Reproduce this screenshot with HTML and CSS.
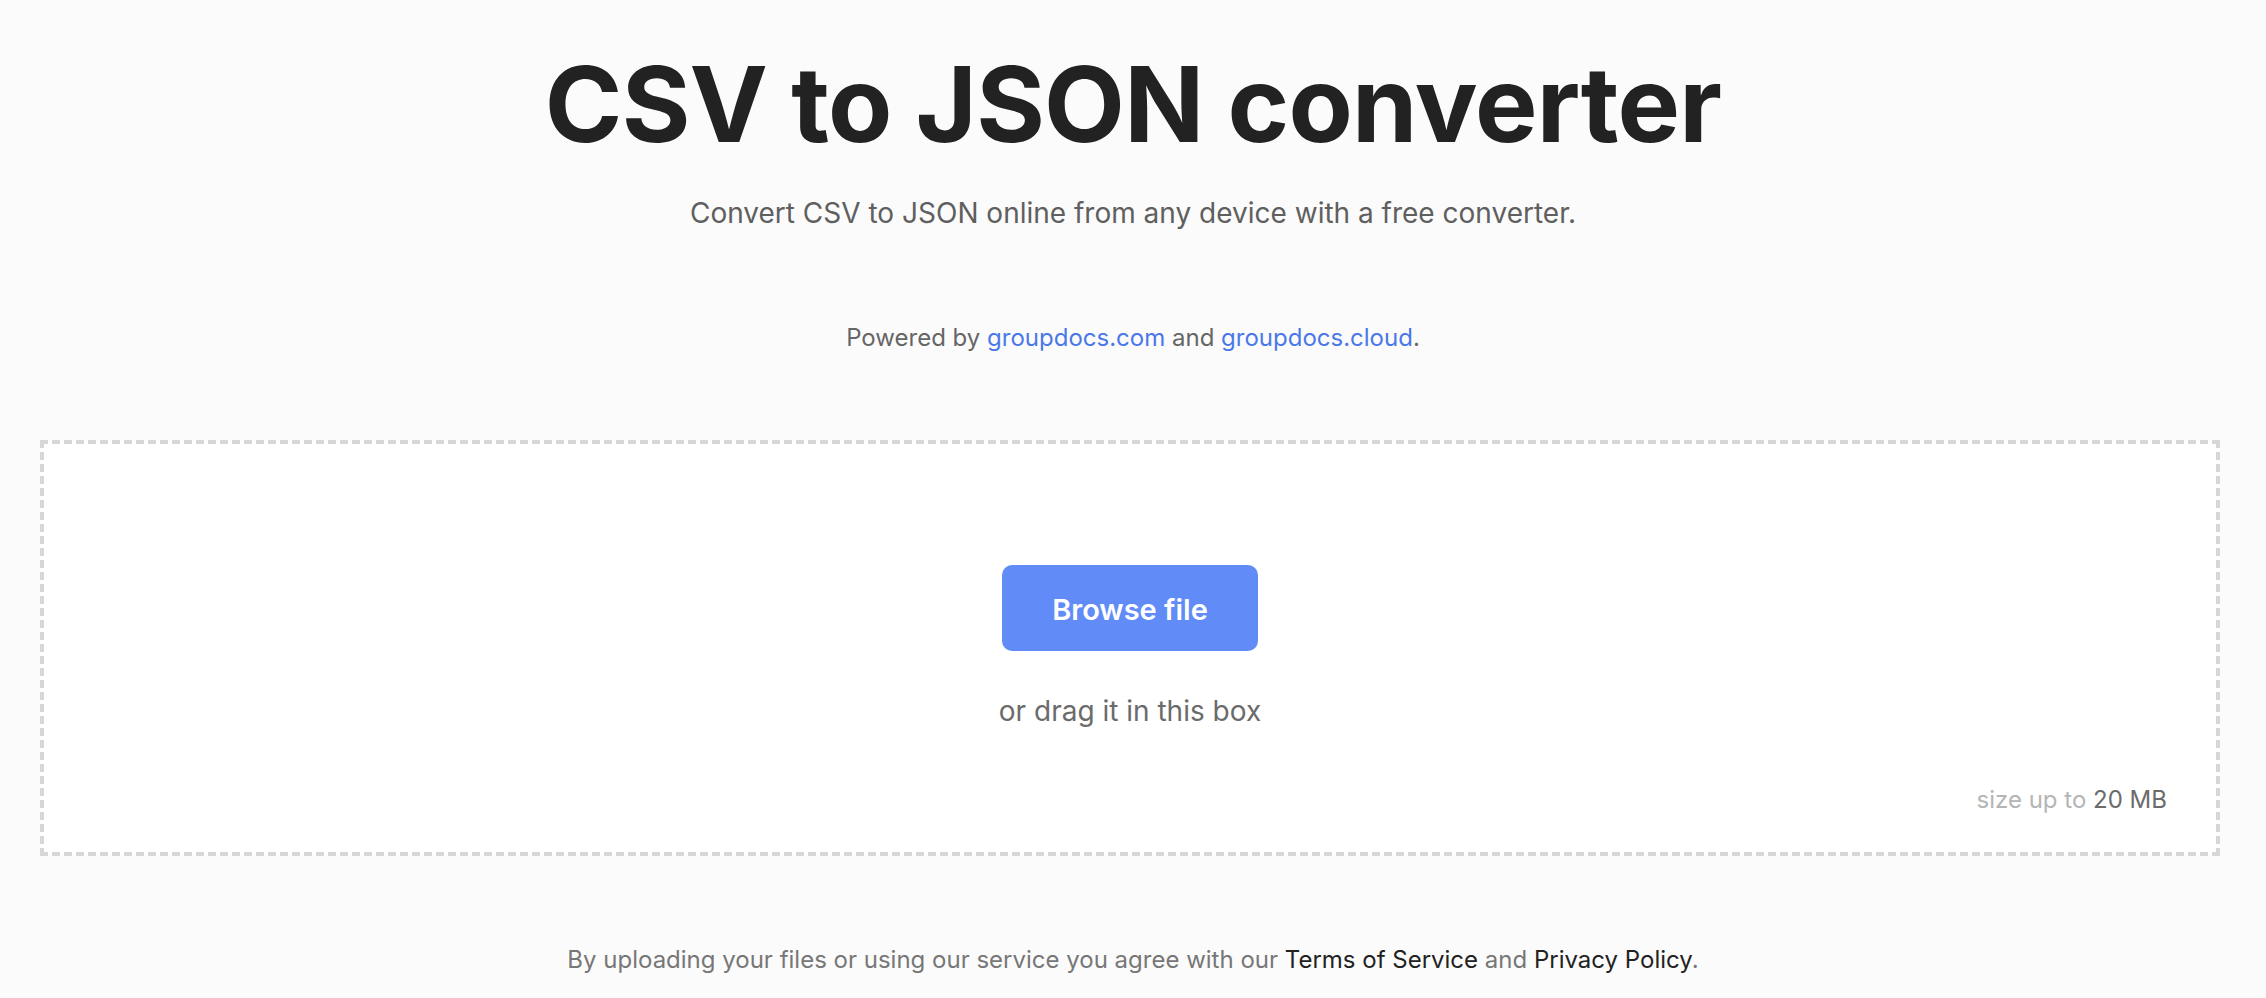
FILE: index.html
```html
<!DOCTYPE html>
<html lang="en">
<head>
<meta charset="utf-8">
<title>CSV to JSON converter</title>
<link rel="stylesheet" href="styles.css">
</head>
<body>
<header class="hero">
  <h1 class="title">CSV to JSON converter</h1>
  <p class="subtitle">Convert CSV to JSON online from any device with a free converter.</p>
  <p class="powered">Powered by <a href="#" class="link">groupdocs.com</a> and <a href="#" class="link">groupdocs.cloud</a>.</p>
</header>
<main class="drop">
  <div class="drop-center">
    <button class="browse" type="button">Browse file</button>
    <p class="drag">or drag it in this box</p>
  </div>
  <p class="size">size up to <span class="size-value">20 MB</span></p>
</main>
<footer class="legal">
  <p class="legal-text">By uploading your files or using our service you agree with our <a href="#" class="legal-link">Terms of Service</a> and <a href="#" class="legal-link">Privacy Policy</a>.</p>
</footer>
</body>
</html>
```
FILE: styles.css
```css
html, body {
  margin: 0;
  padding: 0;
}
body {
  background: #fbfbfb;
  font-family: Inter, "Noto Sans", sans-serif;
  color: #222;
}
.hero {
  text-align: center;
  padding-top: 39px;
}
.title {
  margin: 0;
  font-size: 105px;
  line-height: 130px;
  font-weight: 700;
  color: #222;
  letter-spacing: -0.8px;
}
.subtitle {
  margin: 26px 0 0;
  font-size: 28px;
  line-height: 36px;
  color: #5f5f5f;
}
.powered {
  margin: 90px 0 0;
  font-size: 24px;
  line-height: 33px;
  color: #666;
}
.link {
  color: #4a78e8;
  text-decoration: none;
}
.drop {
  margin: 86px 46px 0 40px;
  height: 408px;
  border: 4px dashed #d6d6d6;
  background: #fff;
  display: flex;
  flex-direction: column;
  box-sizing: content-box;
}
.drop-center {
  flex: 1;
  display: flex;
  flex-direction: column;
  align-items: center;
  padding-top: 121px;
}
.browse {
  width: 256px;
  height: 86px;
  border: 0;
  border-radius: 10px;
  background: #618cf8;
  color: #fff;
  font-family: Inter, "Noto Sans", sans-serif;
  font-size: 29px;
  font-weight: 600;
  padding: 2px 0 0;
  cursor: pointer;
}
.drag {
  margin: 40px 0 0;
  font-size: 28px;
  line-height: 40px;
  color: #6b6b6b;
}
.size {
  margin: 0;
  padding: 0 49px 36px 0;
  text-align: right;
  font-size: 24px;
  line-height: 33px;
  color: #b5b5b5;
}
.size-value {
  color: #6b6b6b;
}
.legal {
  text-align: center;
  padding-top: 87px;
}
.legal-text {
  margin: 0;
  font-size: 24px;
  line-height: 33px;
  color: #777;
}
.legal-link {
  color: #222;
  text-decoration: none;
}
```
